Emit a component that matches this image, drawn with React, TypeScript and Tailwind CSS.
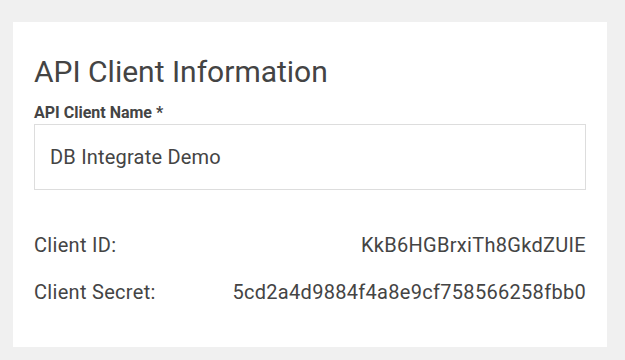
export default function App() {
  return (
    <div className="h-[360px] w-[625px] bg-[#f0f0f0] pt-[22px] pl-[13px] font-['Roboto',sans-serif] text-[#444]">
      <div className="w-[594px] h-[325px] bg-white px-[21px] pt-[32px]">
        <h1 className="text-[30px] leading-[36px] text-[#444]">API Client Information</h1>
        <label className="block mt-[13px] text-[16px] leading-[20px] font-bold text-[#444]">
          API Client Name *
        </label>
        <div className="mt-[1px] h-[66px] border border-[#ddd] flex items-center px-[15px] text-[20px] tracking-[0.2px]">
          DB Integrate Demo
        </div>
        <div className="mt-[43px] flex flex-col gap-[23px] text-[20px] tracking-[0.3px]">
          <div className="flex justify-between leading-[24px]">
            <span>Client ID:</span>
            <span>KkB6HGBrxiTh8GkdZUIE</span>
          </div>
          <div className="flex justify-between leading-[24px]">
            <span>Client Secret:</span>
            <span>5cd2a4d9884f4a8e9cf758566258fbb0</span>
          </div>
        </div>
      </div>
    </div>
  );
}
